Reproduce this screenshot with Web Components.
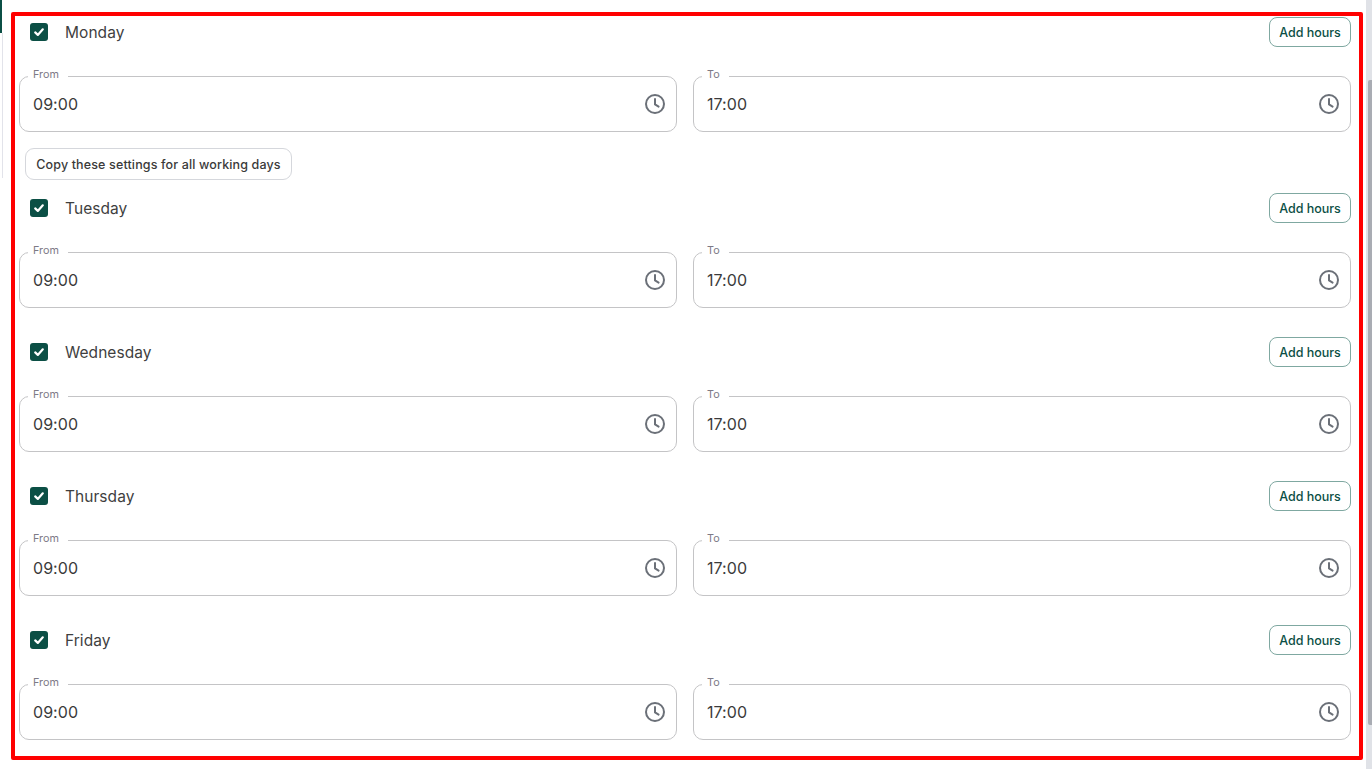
<!DOCTYPE html>
<html>
<head>
<meta charset="utf-8">
<title>Working hours</title>
<style>
  html, body { margin: 0; padding: 0; height: 100%; overflow: hidden; background: #fff; }
  body { font-family: "Inter", "Liberation Sans", sans-serif; color: #3b3b3b; }
</style>
</head>
<body>
<template id="time-field-tpl">
  <style>
    :host { display: block; flex: 1 1 0; min-width: 0; }
    fieldset {
      margin: 0; padding: 0 21px 7px 13px; height: 64px; box-sizing: border-box;
      border: 1px solid #c4c4c6; border-radius: 10px;
      display: flex; align-items: center; justify-content: space-between;
    }
    legend {
      margin-left: -5px; padding: 0 9px 0 5px; height: 16px; line-height: 14px;
      font-size: 10.8px; color: #7d7a86;
    }
    .value { font-size: 16px; color: #3b3b3b; letter-spacing: .05px; }
    svg { display: block; width: 24px; height: 24px; margin-right: -12px; }
  </style>
  <fieldset>
    <legend><slot name="label"></slot></legend>
    <span class="value"><slot></slot></span>
    <svg viewBox="0 0 24 24" fill="none" stroke="#6b7078" stroke-width="2">
      <circle cx="12" cy="12" r="9"></circle>
      <path d="M12 7v5.4l3.6 2.2" stroke-linecap="round" stroke-linejoin="round"></path>
    </svg>
  </fieldset>
</template>

<template id="day-row-tpl">
  <style>
    :host { display: block; }
    .head { display: flex; align-items: center; justify-content: space-between; height: 29px; margin-bottom: 21px; padding-left: 11px; }
    .left { display: flex; align-items: center; gap: 17px; }
    .check { width: 18px; height: 18px; margin-top: -1px; border-radius: 3px; background: #0b4f45; display: flex; align-items: center; justify-content: center; }
    .check svg { display: block; width: 12px; height: 12px; }
    .name { font-size: 15.5px; color: #3f3f3f; letter-spacing: .05px; }
    button {
      font: 550 12.5px "Inter", "Liberation Sans", sans-serif; color: #0b4f45; background: #fff;
      border: 1px solid #7fa8a1; border-radius: 8px; width: 82px; height: 30px; padding: 0;
      align-self: flex-start; margin-top: -1px;
    }
    .fields { display: flex; gap: 16px; }
  </style>
  <div class="head">
    <div class="left">
      <div class="check">
        <svg viewBox="0 0 12 12" fill="none" stroke="#fff" stroke-width="2.2" stroke-linecap="round" stroke-linejoin="round"><path d="M2.2 6.4l2.6 2.5 5-5.6"></path></svg>
      </div>
      <span class="name"></span>
    </div>
    <button>Add hours</button>
  </div>
  <div class="fields">
    <time-field><span slot="label">From</span>09:00</time-field>
    <time-field><span slot="label">To</span>17:00</time-field>
  </div>
</template>

<template id="copy-button-tpl">
  <style>
    :host { display: block; margin: 16px 0 14px 6px; width: max-content; }
    button {
      font: 550 12.5px "Inter", "Liberation Sans", sans-serif; color: #3a3a3a; background: #fff;
      border: 1px solid #d5d7dc; border-radius: 9px; width: 267px; height: 32px; padding: 0;
      letter-spacing: .14px;
    }
  </style>
  <button><slot></slot></button>
</template>

<template id="hours-form-tpl">
  <style>
    :host { display: block; padding: 18px 21px 0 19px; }
    .stack { display: flex; flex-direction: column; }
    ::slotted(day-row.spaced) { margin-top: 30px; }
  </style>
  <div class="stack"><slot></slot></div>
</template>

<template id="page-chrome-tpl">
  <style>
    :host { position: fixed; inset: 0; pointer-events: none; display: block; }
    .frame { position: absolute; left: 11px; top: 12px; width: 1352px; height: 748px; box-sizing: border-box; border: 4px solid #f00; border-radius: 2px; }
    .tab { position: absolute; left: 0; top: 0; width: 2px; height: 33px; background: #0b4f45; }
    .rule { position: absolute; left: 2px; top: 33px; width: 1px; height: 145px; background: #e2e3ea; }
    .track { position: absolute; right: 0; top: 0; width: 6px; height: 769px; background: #e0e2e7; }
    .thumb { position: absolute; right: 0; top: 80px; width: 4px; height: 645px; background: #a9acb3; border-radius: 2px 0 0 2px; }
  </style>
  <div class="tab"></div>
  <div class="rule"></div>
  <div class="track"></div>
  <div class="thumb"></div>
  <div class="frame"></div>
</template>

<hours-form>
  <day-row day="Monday"></day-row>
  <copy-button>Copy these settings for all working days</copy-button>
  <day-row day="Tuesday"></day-row>
  <day-row class="spaced" day="Wednesday"></day-row>
  <day-row class="spaced" day="Thursday"></day-row>
  <day-row class="spaced" day="Friday"></day-row>
</hours-form>
<page-chrome></page-chrome>

<script>
  // every element just clones its template into an open shadow root
  class TemplatedElement extends HTMLElement {
    constructor(tplId) {
      super();
      this.attachShadow({ mode: 'open' });
      this.shadowRoot.appendChild(document.getElementById(tplId).content.cloneNode(true));
    }
  }

  class TimeField extends TemplatedElement {
    constructor() { super('time-field-tpl'); }
  }

  class DayRow extends TemplatedElement {
    constructor() { super('day-row-tpl'); }
    connectedCallback() {
      this.shadowRoot.querySelector('.name').textContent = this.getAttribute('day');
    }
  }

  class CopyButton extends TemplatedElement {
    constructor() { super('copy-button-tpl'); }
  }

  class HoursForm extends TemplatedElement {
    constructor() { super('hours-form-tpl'); }
  }

  class PageChrome extends TemplatedElement {
    constructor() { super('page-chrome-tpl'); }
  }

  customElements.define('time-field', TimeField);
  customElements.define('day-row', DayRow);
  customElements.define('copy-button', CopyButton);
  customElements.define('hours-form', HoursForm);
  customElements.define('page-chrome', PageChrome);
</script>
</body>
</html>
